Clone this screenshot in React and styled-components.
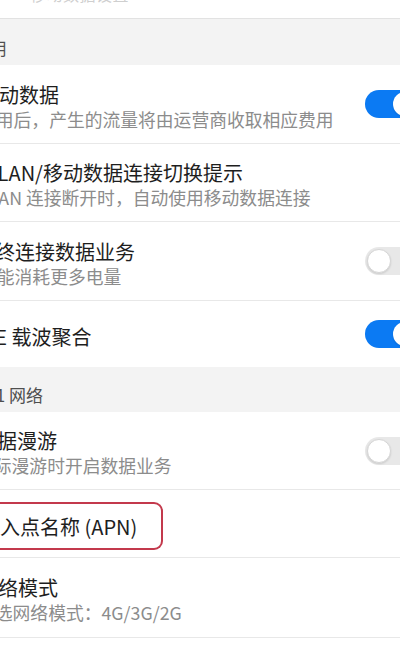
import styled, { createGlobalStyle } from 'styled-components'

const GlobalStyle = createGlobalStyle`
    html, body {
        margin: 0;
        padding: 0;
        background: #ffffff;
        overflow: hidden;
    }
    body {
        font-family: "Noto Sans CJK SC", "Noto Sans", sans-serif;
    }
`

const sections = [
    {
        header: '通用',
        headerShift: -27,
        height: 46,
        items: [
            { title: '移动数据', sub: '启用后，产生的流量将由运营商收取相应费用', t: -21, s: -22, on: true, h: 79 },
            { title: 'WLAN/移动数据连接切换提示', sub: 'WLAN 连接断开时，自动使用移动数据连接', t: -20, s: -27, h: 78 },
            { title: '始终连接数据业务', sub: '可能消耗更多电量', t: -25, s: -21, on: false, h: 79 },
            { title: 'LTE 载波聚合', t: -25, on: true, h: 66, last: true },
        ],
    },
    {
        header: '卡 1 网络',
        headerShift: -25,
        height: 45,
        items: [
            { title: '数据漫游', sub: '国际漫游时开启数据业务', t: -23, s: -24, on: false, h: 78 },
            { title: '接入点名称 (APN)', t: -20, h: 68, marked: true },
            { title: '网络模式', sub: '首选网络模式：4G/3G/2G', t: -22, s: -23, h: 80 },
        ],
    },
]

function Switch({ on }) {
    return (
        <Track $on={on}>
            <Knob $on={on} />
        </Track>
    )
}

function App() {
    return (
        <>
            <GlobalStyle />
            <Screen>
                <TopStrip>
                    <Peek>移动数据设置</Peek>
                </TopStrip>
                {sections.map((sec) => (
                    <div key={sec.header}>
                        <SectionHeader $h={sec.height}>
                            <span style={{ marginLeft: sec.headerShift }}>{sec.header}</span>
                        </SectionHeader>
                        {sec.items.map((it) => (
                            <Row key={it.title} $h={it.h} $last={it.last}>
                                <TextBlock>
                                    {it.marked ? (
                                        <Marked>
                                            <Title style={{ marginLeft: it.t + 12 }}>{it.title}</Title>
                                        </Marked>
                                    ) : (
                                        <Title style={{ marginLeft: it.t }}>{it.title}</Title>
                                    )}
                                    {it.sub && <Sub style={{ marginLeft: it.s }}>{it.sub}</Sub>}
                                </TextBlock>
                                {it.on !== undefined && <Switch on={it.on} />}
                            </Row>
                        ))}
                    </div>
                ))}
            </Screen>
        </>
    )
}
export default App

const Screen = styled.div`
    width: 400px;
    height: 653px;
    overflow: hidden;
    display: flex;
    flex-direction: column;
    background: #ffffff;
`
const TopStrip = styled.div`
    height: 19px;
    box-sizing: border-box;
    overflow: hidden;
    border-bottom: 1px solid #e2e2e2;
`
const Peek = styled.div`
    margin-top: -16px;
    margin-left: 30px;
    font-size: 16px;
    line-height: 20px;
    color: #cfcfcf;
    letter-spacing: 0.5px;
`
const SectionHeader = styled.div`
    height: ${(p) => p.$h}px;
    box-sizing: border-box;
    background: #f3f3f3;
    display: flex;
    align-items: center;
    padding-top: 10px;
    font-size: 17px;
    color: #4f4f4f;
    white-space: nowrap;
`
const Row = styled.div`
    height: ${(p) => p.$h}px;
    box-sizing: border-box;
    display: flex;
    align-items: center;
    justify-content: space-between;
    border-bottom: ${(p) => (p.$last ? 'none' : '1px solid #e8e8e8')};
    background: #ffffff;
`
const TextBlock = styled.div`
    display: flex;
    flex-direction: column;
    padding-top: 5px;
    white-space: nowrap;
    min-width: 0;
`
const Title = styled.div`
    font-size: 20px;
    line-height: 25px;
    color: #1e1e1e;
`
const Sub = styled.div`
    font-size: 17.8px;
    line-height: 25px;
    color: #8c8c8c;
`
const Marked = styled.div`
    margin-left: -12px;
    width: 175px;
    height: 48px;
    box-sizing: border-box;
    border: 2.5px solid #c3394c;
    border-left: none;
    border-radius: 0 9px 9px 0;
    display: flex;
    align-items: center;
`
const Track = styled.div`
    width: 54px;
    height: 28px;
    box-sizing: border-box;
    margin-right: -19px;
    flex-shrink: 0;
    border-radius: 14px;
    padding: 2px;
    display: flex;
    align-items: center;
    justify-content: ${(p) => (p.$on ? 'flex-end' : 'flex-start')};
    background: ${(p) => (p.$on ? '#0b7af3' : '#e8e8e8')};
`
const Knob = styled.div`
    width: 24px;
    height: 24px;
    box-sizing: border-box;
    border-radius: 50%;
    background: #ffffff;
    border: 1px solid ${(p) => (p.$on ? 'transparent' : '#d6d6d6')};
    box-shadow: 0 1px 2px rgba(0, 0, 0, 0.12);
`
